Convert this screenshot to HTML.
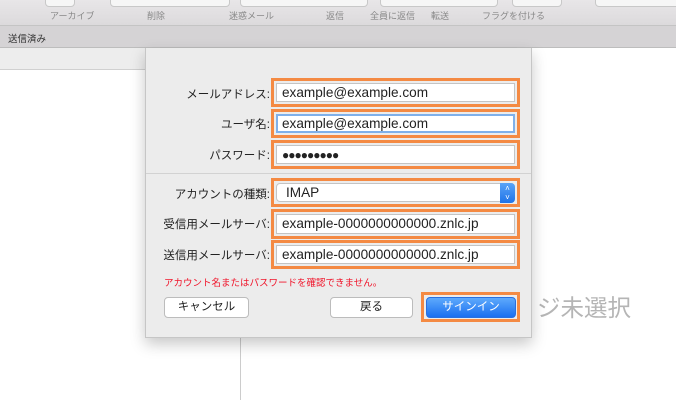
<!DOCTYPE html>
<html><head><meta charset="utf-8"><style>
*{margin:0;padding:0;box-sizing:border-box}
body{width:676px;height:400px;overflow:hidden;background:#fff;position:relative;font-family:"Liberation Sans","Noto Sans CJK JP",sans-serif}
.a{position:absolute}
.tb{left:0;top:0;width:676px;height:26px;background:linear-gradient(#e8e6e8,#dcdadc);border-bottom:1px solid #c4c4c4}
.tl{font-size:9px;color:#888;top:9px}
.btn0{top:-6px;height:13px;background:#f6f6f6;border:1px solid #c8c8c8;border-radius:4px}
.bar2{left:0;top:26px;width:676px;height:22px;background:#d5d3d5;border-bottom:1px solid #bdbdbd}
.dlg{left:145px;top:48px;width:387px;height:290px;background:#ececec;border:1px solid #c6c6c6;border-top:none;box-shadow:0 6px 14px rgba(0,0,0,.22)}
.lab{font-size:11.5px;color:#222;text-align:right;width:140px;left:130px}
.ob{border:3px solid #f48a43;left:271px;width:249px}
.inp{position:absolute;left:2px;top:2px;right:2px;bottom:2px;background:#fff;border:1px solid #c4c4c4;font-size:13.6px;color:#222;padding-left:5px;line-height:18px}
.pb{background:#fff;border:1px solid #bcbcbc;border-radius:4px;font-size:11.5px;text-align:center;line-height:19px;color:#222;top:297px;height:21px}
</style></head><body>
<div class="a tb"></div>
<div class="a btn0" style="left:45px;width:30px"></div>
<div class="a btn0" style="left:110px;width:120px"></div>
<div class="a btn0" style="left:240px;width:128px"></div>
<div class="a btn0" style="left:380px;width:118px"></div>
<div class="a btn0" style="left:512px;width:50px"></div>
<div class="a btn0" style="left:595px;width:90px"></div>
<div class="a tl" style="left:50px">アーカイブ</div>
<div class="a tl" style="left:147px">削除</div>
<div class="a tl" style="left:229px">迷惑メール</div>
<div class="a tl" style="left:326px">返信</div>
<div class="a tl" style="left:370px">全員に返信</div>
<div class="a tl" style="left:431px">転送</div>
<div class="a tl" style="left:482px">フラグを付ける</div>
<div class="a bar2"></div>
<div class="a" style="left:8px;top:31px;font-size:9.5px;color:#333">送信済み</div>
<div class="a" style="left:0;top:48px;width:145px;height:22px;background:#ededed;border-bottom:1px solid #d0d0d0"></div>
<div class="a" style="left:240px;top:330px;width:1px;height:70px;background:#ccc"></div>
<div class="a" style="left:537px;top:289px;font-size:23.5px;color:#b5b5b5">ジ未選択</div>
<div class="a dlg"></div>
<div class="a" style="left:146px;top:173px;width:385px;height:1px;background:#d2d2d2"></div>

<div class="a lab" style="top:86px">メールアドレス:</div>
<div class="a ob" style="top:78px;height:29px"><div class="inp">example@example.com</div></div>
<div class="a lab" style="top:116px">ユーザ名:</div>
<div class="a ob" style="top:109px;height:29px"><div class="inp" style="border:2px solid #7fb0ea;padding-left:4px;line-height:16px">example@example.com</div></div>
<div class="a lab" style="top:147px">パスワード:</div>
<div class="a ob" style="top:140px;height:29px"><div class="inp" style="font-size:12px;letter-spacing:-1px">●●●●●●●●●</div></div>

<div class="a lab" style="top:186px">アカウントの種類:</div>
<div class="a ob" style="top:178px;height:29px"><div class="inp" style="border-radius:4px;padding-left:9px">IMAP<div style="position:absolute;right:-1px;top:-1px;width:15px;height:20px;background:linear-gradient(#5aa3f7,#1f73e8);border-radius:0 4px 4px 0;color:#fff;font-size:8px;line-height:9px;text-align:center;padding-top:1px">˄<br>˅</div></div></div>
<div class="a lab" style="top:216px">受信用メールサーバ:</div>
<div class="a ob" style="top:209px;height:30px"><div class="inp">example-0000000000000.znlc.jp</div></div>
<div class="a lab" style="top:247px">送信用メールサーバ:</div>
<div class="a ob" style="top:240px;height:29px"><div class="inp">example-0000000000000.znlc.jp</div></div>

<div class="a" style="left:164px;top:275px;font-size:9.5px;color:#f0142a">アカウント名またはパスワードを確認できません。</div>
<div class="a pb" style="left:164px;width:85px">キャンセル</div>
<div class="a pb" style="left:330px;width:83px">戻る</div>
<div class="a" style="left:421px;top:292px;width:99px;height:30px;border:3px solid #f48a43"></div>
<div class="a pb" style="left:426px;width:90px;background:linear-gradient(#5eaafc,#1a6ff0);border-color:#2a70e0;color:#fff">サインイン</div>
</body></html>
